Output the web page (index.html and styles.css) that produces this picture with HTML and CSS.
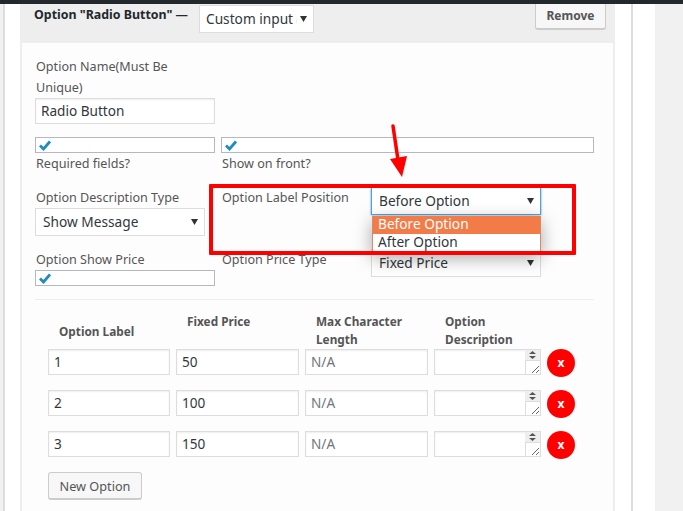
FILE: index.html
```html
<!DOCTYPE html>
<html lang="en">
<head>
  <meta charset="UTF-8" />
  <title>Option Radio Button</title>
  <link rel="stylesheet" href="styles.css">
</head>
<body>
  <div class="topbar"></div>
  <div class="layout">
    <div class="main">
      <div class="option-card">
        <div class="option-head">
          <strong class="option-title">Option "Radio Button" —</strong>
          <select class="type-select">
            <option>Custom input (radio)</option>
          </select>
          <button type="button" class="btn-remove">Remove</button>
        </div>

        <div class="option-body">
          <!-- Name -->
          <label class="field-label name-label" for="optName">Option Name(Must Be Unique)</label>
          <input type="text" id="optName" class="name-input" value="Radio Button" />

          <!-- Required / show on front -->
          <div class="form-grid checks-row">
            <div>
              <span class="check-bar"><svg width="12" height="11" viewBox="0 0 12 11"><path d="M1 5.5 L4.5 9 L11 1.5" fill="none" stroke="#1e8cbe" stroke-width="2.8"/></svg></span>
              <div class="field-label">Required fields?</div>
            </div>
            <div>
              <span class="check-bar"><svg width="12" height="11" viewBox="0 0 12 11"><path d="M1 5.5 L4.5 9 L11 1.5" fill="none" stroke="#1e8cbe" stroke-width="2.8"/></svg></span>
              <div class="field-label">Show on front?</div>
            </div>
          </div>

          <!-- Description type / label position -->
          <div class="form-grid fields-row">
            <div>
              <div class="field-label">Option Description Type</div>
              <select class="wide-select">
                <option>Show Message</option>
              </select>
            </div>
            <div class="inline-field">
              <div class="field-label inline-label">Option Label Position</div>
              <div class="select-wrap">
                <select class="wide-select focused">
                  <option>Before Option</option>
                </select>
                <ul class="dropdown">
                  <li class="active">Before Option</li>
                  <li>After Option</li>
                </ul>
              </div>
            </div>
          </div>

          <!-- Show price / price type -->
          <div class="form-grid fields-row">
            <div>
              <div class="field-label">Option Show Price</div>
              <span class="check-bar"><svg width="12" height="11" viewBox="0 0 12 11"><path d="M1 5.5 L4.5 9 L11 1.5" fill="none" stroke="#1e8cbe" stroke-width="2.8"/></svg></span>
            </div>
            <div class="inline-field">
              <div class="field-label inline-label">Option Price Type</div>
              <select class="wide-select">
                <option>Fixed Price</option>
              </select>
            </div>
          </div>

          <hr class="divider" />

          <!-- Values -->
          <div class="values-grid">
            <div class="col-title col-middle">Option Label</div>
            <div class="col-title">Fixed Price</div>
            <div class="col-title">Max Character Length</div>
            <div class="col-title">Option Description</div>
            <div></div>

            <input type="text" value="1" />
            <input type="text" value="50" />
            <input type="text" placeholder="N/A" />
            <div class="desc-box"><span class="desc-spin"></span><span class="desc-grip"></span></div>
            <button type="button" class="btn-delete">x</button>

            <input type="text" value="2" />
            <input type="text" value="100" />
            <input type="text" placeholder="N/A" />
            <div class="desc-box"><span class="desc-spin"></span><span class="desc-grip"></span></div>
            <button type="button" class="btn-delete">x</button>

            <input type="text" value="3" />
            <input type="text" value="150" />
            <input type="text" placeholder="N/A" />
            <div class="desc-box"><span class="desc-spin"></span><span class="desc-grip"></span></div>
            <button type="button" class="btn-delete">x</button>
          </div>

          <button type="button" class="btn-new">New Option</button>
        </div>
      </div>
    </div>
    <div class="side"></div>
  </div>

  <!-- annotation drawn over the screenshot -->
  <div class="note-box"></div>
  <svg class="note-arrow" width="24" height="60" viewBox="0 0 24 60">
    <path d="M5 2 L10 36" stroke="#ff0000" stroke-width="3.5" stroke-linecap="round" fill="none"/>
    <path d="M2 35 L19 32 L14 53 Z" fill="#ff0000"/>
  </svg>
</body>
</html>
```

FILE: styles.css
```css
html, body {
  height: 511px;
  overflow: hidden;
}
body {
  position: relative;
  margin: 0;
  background-color: #f1f1f1;
  font-family: 'Noto Sans', 'Open Sans', sans-serif;
  font-size: 12.6px;
  line-height: 21px;
  color: #555;
}
.topbar {
  height: 4px;
  background-color: #23282d;
}
.layout {
  display: flex;
  height: 507px;
  margin-left: 3px;
}
.main {
  padding: 0 16px 0 15px;
  width: 595px;
  background: white;
  border-left: 2px solid #ddd;
  border-right: 2px solid #ddd;
}
.side {
  width: 22px;
  background: white;
}
.option-card {
  height: 507px;
  border-left: 2px solid #eee;
  border-right: 2px solid #eee;
  background: #fdfdfd;
}
.option-head {
  display: flex;
  align-items: flex-start;
  height: 39px;
  margin: 0 -2px;
  padding-left: 14px;
  background-color: #eee;
}
.option-title {
  width: 165px;
  color: #23282d;
  font-size: 12.4px;
  line-height: 22px;
  white-space: nowrap;
}
select {
  appearance: none;
  background: white url("data:image/svg+xml,%3Csvg xmlns='http://www.w3.org/2000/svg' width='7' height='6'%3E%3Cpath d='M0 0H7L3.5 6Z' fill='%23333'/%3E%3C/svg%3E") no-repeat right 6px center;
  color: #32373c;
  font: 13.7px 'Noto Sans', sans-serif;
}
.type-select {
  width: 115px;
  height: 28px;
  margin-top: 1px;
  padding: 0 16px 2px 6px;
  border: 1px solid #ddd;
}
.btn-remove {
  width: 71px;
  height: 26px;
  margin-left: auto;
  margin-right: 9px;
  padding: 0 0 2px;
  border: 1px solid #ccc;
  border-top: 0;
  border-bottom-width: 2px;
  border-radius: 0 0 3px 3px;
  background: #f7f7f7;
  color: #555;
  font: bold 12px 'Noto Sans', sans-serif;
}
.option-body {
  padding: 12px 19px 0 13px;
}
.field-label {
  padding-left: 1px;
  height: 21px;
}
.name-label {
  display: block;
  width: 179px;
  height: 42px;
  padding-top: 1px;
}
input[type="text"] {
  box-sizing: border-box;
  height: 26px;
  width: 100%;
  padding: 0 5px 2px;
  border: 1px solid #ddd;
  box-shadow: inset 0 1px 2px rgba(0,0,0,0.07);
  background: white;
  color: #32373c;
  font: 13.6px 'Noto Sans', sans-serif;
}
input[type="text"]::placeholder {
  color: #72777c;
}
.name-input {
  display: block;
  width: 180px !important;
}
.form-grid {
  display: grid;
  grid-template-columns: 180px 373px;
  column-gap: 6px;
}
.checks-row {
  margin-top: 13px;
}
.fields-row {
  margin-top: 13px;
}
.check-bar {
  display: block;
  box-sizing: border-box;
  height: 16px;
  padding-left: 3px;
  border: 1px solid #b4b9be;
  background: white;
}
.check-bar svg {
  display: block;
  margin-top: 2px;
}
.inline-field {
  display: flex;
  align-items: flex-start;
}
.inline-label {
  width: 149px;
}
.wide-select {
  display: block;
  box-sizing: border-box;
  width: 170px;
  height: 28px;
  padding: 0 20px 2px 7px;
  border: 1px solid #ddd;
}
.focused {
  border-color: #5b9dd9;
  box-shadow: 0 0 2px rgba(30,140,190,0.8);
}
.select-wrap {
  position: relative;
  height: 49px;
}
.dropdown {
  position: absolute;
  top: 29px;
  left: 1px;
  width: 169px;
  box-sizing: border-box;
  margin: 0;
  padding: 0;
  list-style: none;
  background: white;
  border: 1px solid #d98a6a;
  border-top: 0;
  box-shadow: 0 5px 18px rgba(0,0,0,0.35);
  color: #32373c;
  font-size: 13.7px;
  line-height: 16px;
  z-index: 2;
}
.dropdown li {
  height: 18px;
  padding-left: 5px;
}
.dropdown .active {
  background-color: #f37b48;
  color: white;
}
.divider {
  height: 1px;
  margin: 13px 0 0;
  border: 0;
  background-color: #eee;
}
.values-grid {
  display: grid;
  grid-template-columns: 122px 123px 123px 107px 28px;
  column-gap: 6px;
  row-gap: 13px;
  margin-left: 13px;
  padding-top: 12px;
}
.col-title {
  padding-left: 11px;
  margin-bottom: -13px;
  font-size: 11.8px;
  font-weight: bold;
  line-height: 18px;
  height: 37px;
}
.col-middle {
  display: flex;
  align-items: center;
}
.desc-box {
  display: flex;
  flex-direction: column;
  align-items: flex-end;
  box-sizing: border-box;
  height: 26px;
  border: 1px solid #ddd;
  background: white;
  box-shadow: inset 0 1px 2px rgba(0,0,0,0.07);
}
.desc-spin {
  width: 15px;
  height: 10px;
  background: #eee url("data:image/svg+xml,%3Csvg xmlns='http://www.w3.org/2000/svg' width='7' height='8'%3E%3Cpath d='M3.5 0L7 3H0ZM0 5H7L3.5 8Z' fill='%23555'/%3E%3C/svg%3E") no-repeat center;
}
.desc-grip {
  width: 15px;
  flex: 1;
  box-sizing: border-box;
  border-left: 1px solid #ddd;
  border-top: 1px solid #ddd;
  background: url("data:image/svg+xml,%3Csvg xmlns='http://www.w3.org/2000/svg' width='9' height='9'%3E%3Cpath d='M1 8L8 1M5 8L8 5' stroke='%23666' fill='none'/%3E%3C/svg%3E") no-repeat right 0 bottom 0;
}
.btn-delete {
  width: 28px;
  height: 28px;
  padding: 0 0 1px;
  border: none;
  border-radius: 50%;
  background-color: #ff0000;
  color: white;
  font: bold 12px 'Noto Sans', sans-serif;
}
.btn-new {
  display: block;
  width: 94px;
  height: 28px;
  margin: 13px 0 0 13px;
  padding: 0;
  border: 1px solid #ccc;
  border-bottom-width: 2px;
  border-radius: 3px;
  background: #f7f7f7;
  color: #555;
  font: 12.7px 'Noto Sans', sans-serif;
}
.note-box {
  position: absolute;
  left: 209px;
  top: 184px;
  width: 367px;
  height: 71px;
  box-sizing: border-box;
  border: 4px solid #ff0000;
  border-radius: 1px;
  z-index: 3;
}
.note-arrow {
  position: absolute;
  left: 388px;
  top: 124px;
  z-index: 3;
}
```
